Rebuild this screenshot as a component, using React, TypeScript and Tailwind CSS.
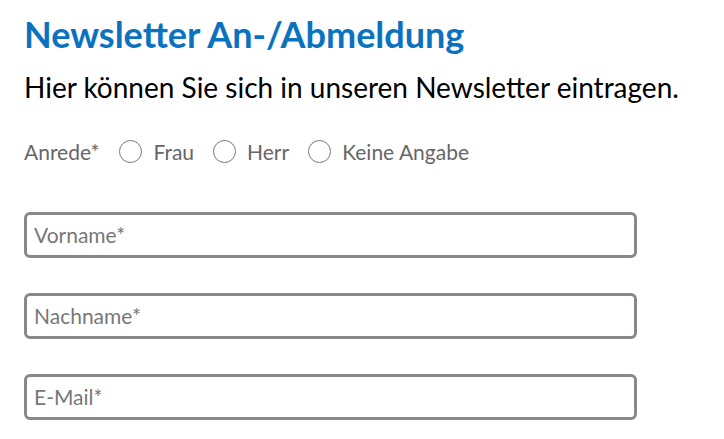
export default function App() {
  const font = { fontFamily: 'Lato, "Open Sans", sans-serif' };
  return (
    <div className="min-h-screen bg-white pl-6 pt-[12px]" style={font}>
      <h1 className="text-[36px] font-bold leading-[44px] text-[#0a72bf]">Newsletter An-/Abmeldung</h1>
      <p className="mt-[14px] text-[28px] leading-[34px] text-black">Hier können Sie sich in unseren Newsletter eintragen.</p>

      <div className="mt-[32px] flex items-center text-[21px] text-[#666]">
        <span className="mr-[20px]">Anrede*</span>
        {['Frau', 'Herr', 'Keine Angabe'].map((opt) => (
          <label key={opt} className="mr-[19px] flex items-center gap-[11px]">
            <span className="h-[23px] w-[23px] rounded-full border border-[#777] bg-white" />
            {opt}
          </label>
        ))}
      </div>

      <div className="mt-[44px] flex flex-col gap-[35px]">
        {['Vorname*', 'Nachname*', 'E-Mail*'].map((ph) => (
          <input
            key={ph}
            placeholder={ph}
            className="h-[46px] w-[613px] rounded-[6px] border-[3px] border-[#888] px-[7px] text-[21px] text-[#333] placeholder:text-[#777] outline-none"
            style={font}
          />
        ))}
      </div>
    </div>
  );
}
